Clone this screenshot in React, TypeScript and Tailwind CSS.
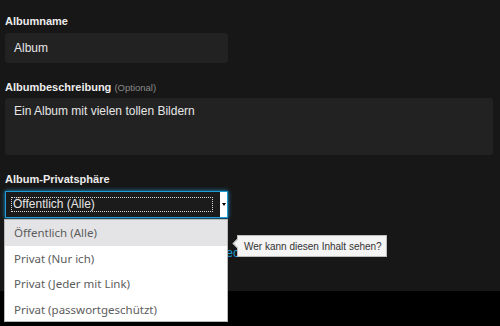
const options = [
  "Öffentlich (Alle)",
  "Privat (Nur ich)",
  "Privat (Jeder mit Link)",
  "Privat (passwortgeschützt)",
];

export default function App() {
  return (
    <div className="w-[500px] h-[326px] bg-black overflow-hidden relative font-['Liberation_Sans',Arial,sans-serif]">
      <div className="h-[291px] bg-[#171717] px-[5px] pt-[15px]">
        {/* Albumname */}
        <label className="block text-[11px] leading-[13px] font-bold text-[#ececec]">Albumname</label>
        <div className="mt-[5px] w-[223px] h-[30px] rounded-[3px] bg-[#222222] flex items-center px-[9px] text-[12px] text-[#e6e6e6]">
          Album
        </div>

        {/* Beschreibung */}
        <label className="block mt-[18px] text-[11px] leading-[13px] font-bold text-[#ececec]">
          Albumbeschreibung <span className="font-normal text-[9.5px] text-[#8a8a8a]">(Optional)</span>
        </label>
        <div className="mt-[4px] w-[488px] h-[57px] rounded-[3px] bg-[#222222] px-[9px] pt-[6px] text-[12px] leading-[14px] text-[#e6e6e6]">
          Ein Album mit vielen tollen Bildern
        </div>

        {/* Privatsphäre */}
        <label className="block mt-[18px] text-[11px] leading-[13px] font-bold text-[#ececec]">Album-Privatsphäre</label>
        <div className="mt-[5px] w-[223px] h-[27px] border-[1.5px] border-[#1f9bd6] shadow-[0_0_4px_#1f9bd6] bg-[#1b1b1b] flex items-center">
          <div className="ml-[5px] w-[202px] h-[15px] border border-dotted border-[#d8d8d8] flex items-center text-[12px] leading-[13px] text-[#e6e6e6] pl-[1px]">
            Öffentlich (Alle)
          </div>
          <div className="ml-auto w-[7px] h-full bg-white flex items-center justify-center">
            <span className="w-0 h-0 border-l-[2px] border-r-[2px] border-t-[3px] border-l-transparent border-r-transparent border-t-black" />
          </div>
        </div>
        <div className="mt-[28px] ml-[196px] text-[12px] leading-[14px] text-[#1f9bd6]">Abbrechen</div>
      </div>

      {/* open native dropdown list */}
      <ul className="absolute left-[4px] top-[219px] w-[224px] h-[103px] bg-white border border-[#b9b9b9] font-['Noto_Sans',sans-serif] text-[11.5px] text-[#5c5c5c]">
        {options.map((o, i) => (
          <li
            key={o}
            className={`h-[25.5px] flex items-center pl-[9px] ${i === 0 ? "bg-[#e4e4e6]" : ""}`}
          >
            {o}
          </li>
        ))}
      </ul>

      {/* tooltip */}
      <div className="absolute left-[237px] top-[235px] w-[150px] h-[22px] bg-[#f4f4f4] border border-[#bdbdbd] flex items-center pl-[6px] text-[10px] text-[#333333]">
        <span className="absolute -left-[4px] top-[4px] w-[7px] h-[7px] rotate-45 bg-[#f4f4f4] border-l border-b border-[#bdbdbd]" />
        Wer kann diesen Inhalt sehen?
      </div>
    </div>
  );
}
